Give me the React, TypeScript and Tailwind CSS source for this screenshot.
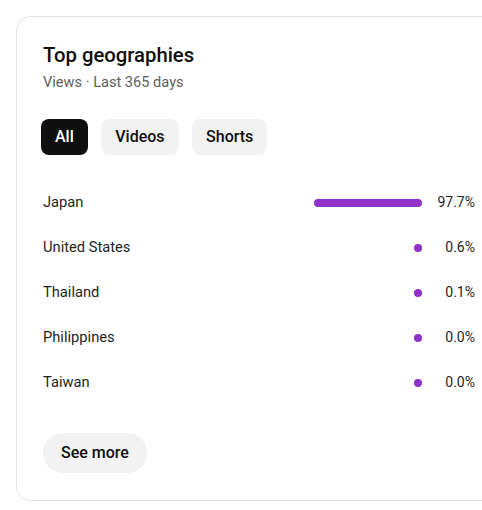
import React from "react";

const rows = [
  { name: "Japan", pct: 97.7 },
  { name: "United States", pct: 0.6 },
  { name: "Thailand", pct: 0.1 },
  { name: "Philippines", pct: 0.0 },
  { name: "Taiwan", pct: 0.0 },
];

export default function App() {
  return (
    <div
      className="w-[482px] h-[510px] overflow-hidden bg-white pt-4 pl-4"
      style={{ fontFamily: "Roboto, 'Noto Sans', Arial, sans-serif" }}
    >
      <div className="w-[486px] h-[485px] rounded-[14px] border border-[#e5e5e5] pl-[26px] pr-[26px] pt-[24px] text-[#0f0f0f]">
        <div className="text-[20.3px] leading-[28px] font-medium">Top geographies</div>
        <div className="mt-[3px] text-[14.6px] leading-[20px] text-[#606060]">Views · Last 365 days</div>
        <div className="mt-[27px] flex gap-[13.5px] -ml-[2px]">
          <button className="h-[36px] px-[14px] rounded-lg bg-[#0f0f0f] text-white text-[16px] font-medium">All</button>
          <button className="h-[36px] px-[14px] rounded-lg bg-[#f2f2f2] text-[16px] font-medium">Videos</button>
          <button className="h-[36px] px-[14px] rounded-lg bg-[#f2f2f2] text-[16px] font-medium">Shorts</button>
        </div>
        <div className="mt-[25px] flex flex-col">
          {rows.map((r) => (
            <div key={r.name} className="h-[45px] flex items-center">
              <div className="flex-1 text-[14.7px] text-[#1f1f1f]">{r.name}</div>
              <div className="w-[110px] flex justify-end">
                <div
                  className="h-[8px] rounded-full bg-[#9031c9]"
                  style={{ width: Math.max(8, (r.pct / 100) * 110.5) }}
                />
              </div>
              <div className="w-[53px] text-right text-[14px] text-[#1f1f1f]">{r.pct.toFixed(1)}%</div>
            </div>
          ))}
        </div>
        <button className="mt-[28px] h-[40px] px-[18px] rounded-full bg-[#f2f2f2] text-[16px] font-medium">
          See more
        </button>
      </div>
    </div>
  );
}
